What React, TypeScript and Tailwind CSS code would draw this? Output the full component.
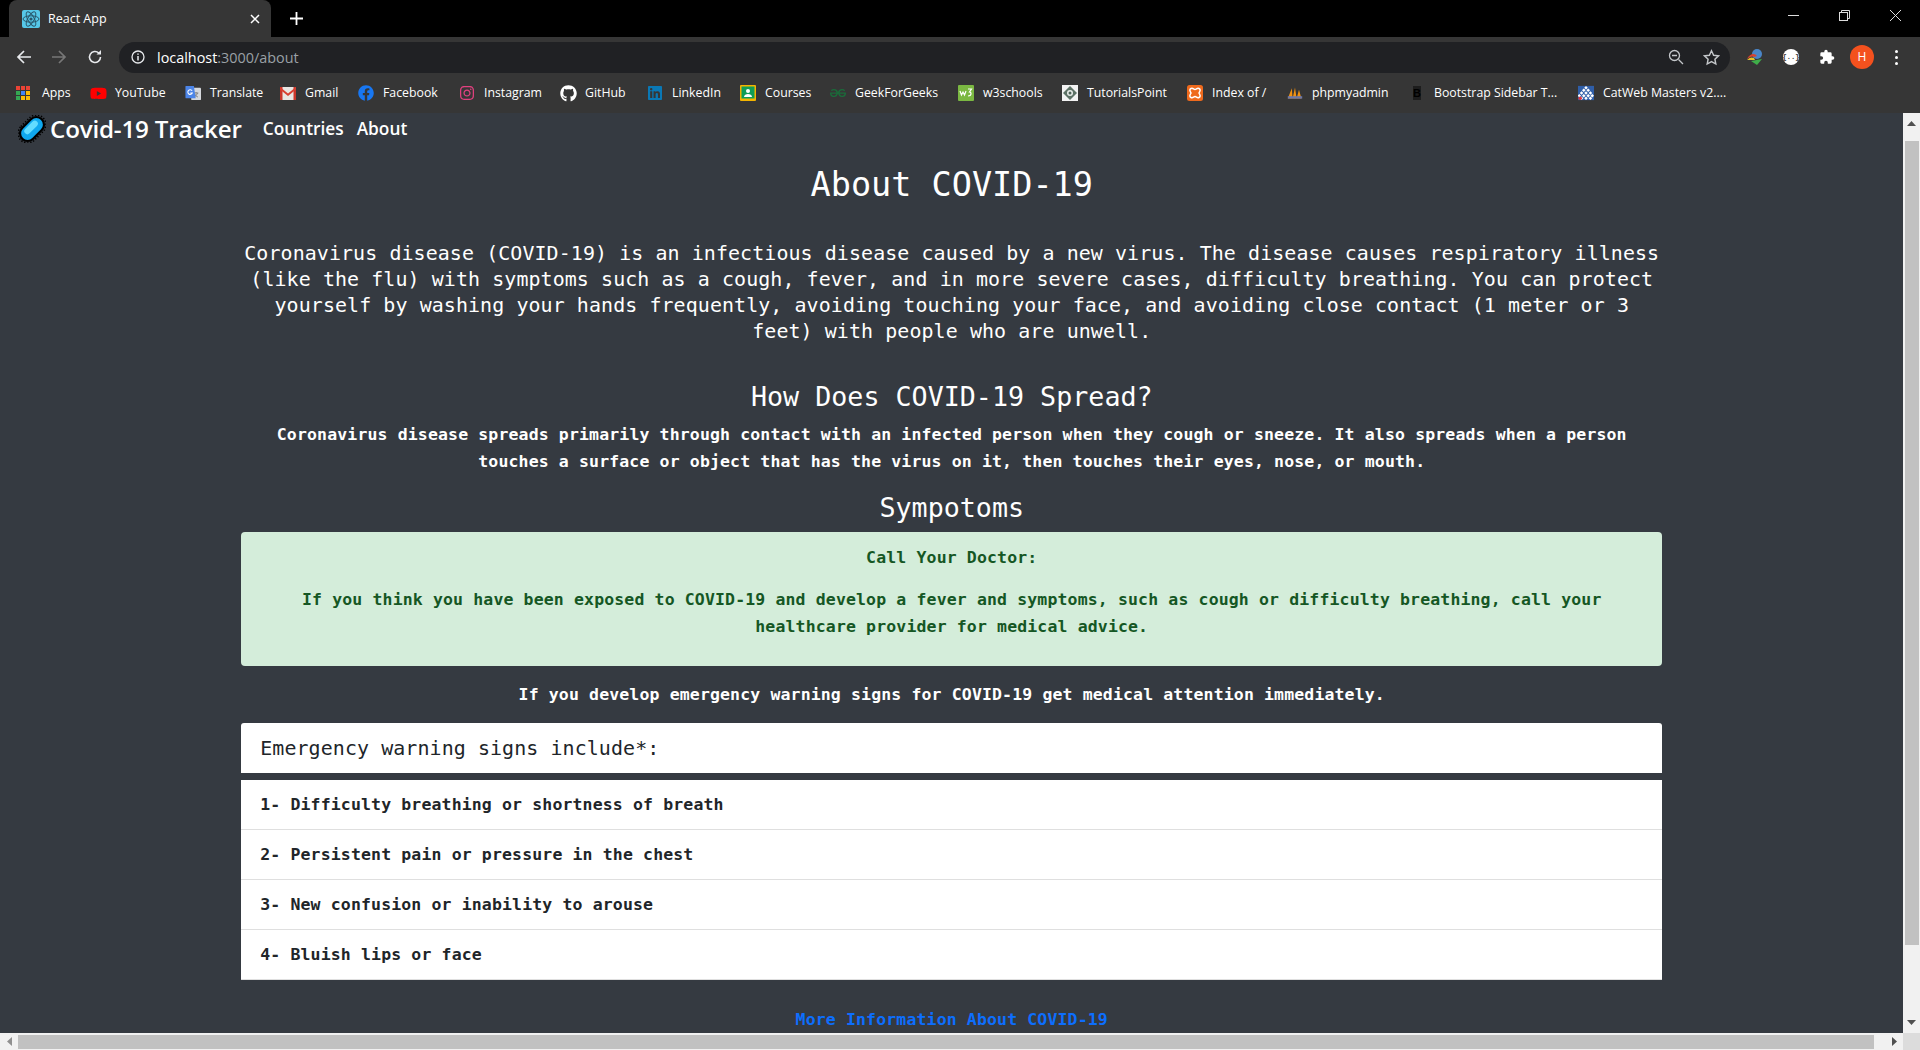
import React from "react";
import { FaFacebook, FaGithub, FaInstagram, FaLinkedin, FaYoutube } from "react-icons/fa";
import { SiGeeksforgeeks } from "react-icons/si";

const Apps = () => (
  <svg width="16" height="16" viewBox="0 0 16 16">
    {[1, 6, 11].flatMap((y, r) =>
      [1, 6, 11].map((x, c) => (
        <rect key={`${r}${c}`} x={x} y={y} width="4" height="4" fill={[["#ea4335", "#ea4335", "#ea4335"], ["#34a853", "#4285f4", "#fbbc05"], ["#34a853", "#fbbc05", "#fbbc05"]][r][c]} />
      ))
    )}
  </svg>
);
const Translate = () => (
  <svg width="18" height="18" viewBox="0 0 18 18">
    <rect x="7" y="3" width="11" height="14" rx="1" fill="#d5d8dc" />
    <path d="M10 9h5M12.500 8v1M14 9c-.5 2-2 3.500-3.500 4M11 10c.5 1.500 2 3 3.500 3.500" stroke="#777" strokeWidth="1" fill="none" />
    <path d="M1 1h9l2 14H1.500A1 1 0 0 1 .5 14V2A1 1 0 0 1 1 1z" fill="#4c85e8" />
    <path d="M8 6.500A2.600 2.600 0 1 0 8.200 9H6" stroke="#fff" strokeWidth="1.200" fill="none" />
  </svg>
);
const Gmail = () => (
  <svg width="16" height="16" viewBox="0 0 16 16">
    <rect x="0" y="2" width="16" height="13" fill="#e8e6e3" />
    <path d="M0 2h2.500v13H0zM13.500 2H16v13h-2.500z" fill="#c9362b" />
    <path d="M0 2l8 6.500L16 2v2.500L8 11 0 4.500z" fill="#d93f31" />
  </svg>
);
const Courses = () => (
  <svg width="16" height="16" viewBox="0 0 16 16">
    <rect width="16" height="16" rx="1" fill="#f4b400" />
    <rect x="1.500" y="1.500" width="13" height="12" fill="#0f9d58" />
    <circle cx="8" cy="6" r="2" fill="#fff" />
    <path d="M4 12c0-4 8-4 8 0z" fill="#fff" />
  </svg>
);
const W3 = () => (
  <svg width="16" height="16" viewBox="0 0 16 16">
    <rect width="16" height="16" rx="1" fill="#7bb842" />
    <path d="M2 6l1.500 4L5 7l1.500 3L8 6M10 4h3.500l-2 3c2 0 2.500 4-1.500 4" stroke="#fff" strokeWidth="1.200" fill="none" />
  </svg>
);
const Tutorials = () => (
  <svg width="16" height="16" viewBox="0 0 16 16">
    <rect width="16" height="16" fill="#f3f3f3" />
    <path d="M8 1l7 7-7 7-7-7z" fill="#5d7266" />
    <circle cx="8" cy="8" r="3" fill="#e8ece9" />
    <circle cx="8" cy="8" r="1.500" fill="#4d6357" />
  </svg>
);
const Xampp = () => (
  <svg width="16" height="16" viewBox="0 0 16 16">
    <rect width="16" height="16" rx="2.500" fill="#ef6a1d" />
    <path d="M4 3.500c2-1 2.500 1 4 1s2-2 4-1 1 2.500 0 4.500c1 2 2 3.500 0 4.500s-2.500-1-4-1-2 2-4 1-1-2.500 0-4.500c-1-2-2-3.500 0-4.500z" fill="none" stroke="#fff" strokeWidth="1.500" />
  </svg>
);
const Pma = () => (
  <svg width="20" height="16" viewBox="0 0 20 16">
    <path d="M1 15L6 2l1 13zM7 15l3-14 2 14zM12 15l3-11 3 11z" fill="#f29111" />
    <rect x="1" y="12" width="18" height="3" fill="#6c78a8" />
  </svg>
);
const BootB = () => (
  <svg width="16" height="16" viewBox="0 0 16 16">
    <rect x="4" y="1" width="8" height="14" fill="#1d1d1d" />
    <text x="8" y="12" textAnchor="middle" fontSize="11" fontWeight="700" fontFamily="Liberation Sans, sans-serif" fill="#000">B</text>
  </svg>
);
const CatWeb = () => (
  <svg width="18" height="16" viewBox="0 0 18 16">
    <rect width="18" height="16" fill="#2f5ea8" />
    {[[9, 2], [6.5, 5], [11.5, 5], [4, 8], [9, 8], [14, 8], [1.5, 11], [6.5, 11], [11.5, 11], [16, 11], [4, 14], [9, 14], [14, 14]].map(([x, y], i) => (
      <path key={i} d={`M${x} ${y - 2}l2 2-2 2-2-2z`} fill="#fff" />
    ))}
    <circle cx="2.500" cy="14" r="2" fill="#e0323c" />
  </svg>
);

const bookmarks = [
  { t: "Apps", i: <Apps />, w: "w-[29px]", g: "ml-[19px]" },
  { t: "YouTube", i: <span className="text-[#f00]"><FaYoutube size={17} /></span>, w: "w-[50px]", g: "ml-[19px]" },
  { t: "Translate", i: <Translate />, w: "w-[52px]", g: "ml-[20px]" },
  { t: "Gmail", i: <Gmail />, w: "w-[34px]", g: "ml-[18px]" },
  { t: "Facebook", i: <span className="text-[#1877f2]"><FaFacebook size={16} /></span>, w: "w-[55px]", g: "ml-[19px]" },
  { t: "Instagram", i: <span className="text-[#e1417f]"><FaInstagram size={16} /></span>, w: "w-[57px]", g: "ml-[21px]" },
  { t: "GitHub", i: <span className="text-white"><FaGithub size={17} /></span>, w: "w-[42px]", g: "ml-[19px]" },
  { t: "LinkedIn", i: <span className="text-[#0a78b5]"><FaLinkedin size={16} /></span>, w: "w-[49px]", g: "ml-[20px]" },
  { t: "Courses", i: <Courses />, w: "w-[47px]", g: "ml-[19px]" },
  { t: "GeekForGeeks", i: <span className="text-[#1b6b3a]"><SiGeeksforgeeks size={16} /></span>, w: "w-[84px]", g: "ml-[18px]" },
  { t: "w3schools", i: <W3 />, w: "w-[60px]", g: "ml-[19px]" },
  { t: "TutorialsPoint", i: <Tutorials />, w: "w-[80px]", g: "ml-[19px]" },
  { t: "Index of /", i: <Xampp />, w: "w-[55px]", g: "ml-[20px]" },
  { t: "phpmyadmin", i: <Pma />, w: "w-[77px]", g: "ml-[20px]" },
  { t: "Bootstrap Sidebar T...", i: <BootB />, w: "w-[125px]", g: "ml-[20px]" },
  { t: "CatWeb Masters v2....", i: <CatWeb />, w: "w-[126px]", g: "ml-[19px]" },
];

const ReactIcon = () => (
  <svg width="18" height="18" viewBox="0 0 18 18" className="rounded-[2px] bg-[#56c8e8]">
    <g fill="none" stroke="#29566a" strokeWidth="1">
      <ellipse cx="9" cy="9" rx="8" ry="3.200" />
      <ellipse cx="9" cy="9" rx="8" ry="3.200" transform="rotate(60 9 9)" />
      <ellipse cx="9" cy="9" rx="8" ry="3.200" transform="rotate(120 9 9)" />
    </g>
    <circle cx="9" cy="9" r="1.600" fill="#29566a" />
  </svg>
);

const Virus = () => (
  <svg width="28" height="28" viewBox="-1 -1 32 32">
    <g transform="rotate(-45 15 15)">
      <rect x="-2" y="5" width="34" height="20" rx="10" fill="#000" />
      <rect x="-3" y="4" width="36" height="22" rx="11" fill="none" stroke="#000" strokeWidth="1.800" strokeDasharray="1.500 2" />
      <rect x="0.500" y="7.500" width="29" height="15" rx="7.500" fill="#10a8ee" />
      <rect x="6" y="9.500" width="19" height="7" rx="3.500" fill="#63dcff" />
    </g>
  </svg>
);

const Back = ({ c }: { c: string }) => (
  <svg width="16" height="16" viewBox="0 0 16 16" fill="none" stroke={c} strokeWidth="1.700">
    <path d="M15 8H2M8 2L2 8l6 6" />
  </svg>
);

const chromeFont = "font-['Open_Sans',sans-serif]";
const mono = "font-['DejaVu_Sans_Mono',monospace]";

export default function App() {
  return (
    <div className="flex h-[1050px] w-[1920px] flex-col overflow-hidden bg-[#353a41]">
      {/* Tab strip */}
      <div className={`flex h-[37px] shrink-0 items-stretch bg-black ${chromeFont}`}>
        <div className="ml-[9px] flex w-[262px] items-center rounded-t-[8px] bg-[#363636] pl-[13px] pr-[9px] text-white">
          <ReactIcon />
          <span className="ml-[8px] pt-[1px] text-[12.500px]">React App</span>
          <svg width="10" height="10" viewBox="0 0 10 10" className="ml-auto mr-[2px]" stroke="#fff" strokeWidth="1.500">
            <path d="M1 1l8 8M9 1L1 9" />
          </svg>
        </div>
        <div className="ml-[19px] flex items-center">
          <svg width="13" height="13" viewBox="0 0 13 13" stroke="#fff" strokeWidth="1.800">
            <path d="M6.500 0v13M0 6.500h13" />
          </svg>
        </div>
        <div className="ml-auto flex items-center pb-[6px]">
          <svg width="11" height="11" viewBox="0 0 11 11" stroke="#ddd" strokeWidth="1"><path d="M0 5.500h11" /></svg>
          <svg width="11" height="11" viewBox="0 0 11 11" fill="none" stroke="#ddd" strokeWidth="1" className="ml-[40px]">
            <rect x="0.500" y="2.500" width="8" height="8" />
            <path d="M2.500 2.500v-2h8v8h-2" />
          </svg>
          <svg width="13" height="13" viewBox="0 0 13 13" stroke="#ddd" strokeWidth="1" className="ml-[39px] mr-[18px]"><path d="M1 1l11 11M12 1L1 12" /></svg>
        </div>
      </div>

      {/* Toolbar */}
      <div className="flex h-[36px] shrink-0 items-center bg-[#363636] pb-[1px] pt-[5px]">
        <div className="ml-[16px]"><Back c="#e8eaed" /></div>
        <div className="ml-[19px] rotate-180"><Back c="#777" /></div>
        <svg width="16" height="16" viewBox="0 0 16 16" fill="none" stroke="#e8eaed" strokeWidth="1.600" className="ml-[20px]">
          <path d="M13.500 8a5.500 5.500 0 1 1-1.700-4" />
          <path d="M14 1v4.500H9.500" fill="#e8eaed" stroke="none" />
        </svg>
        <div className={`ml-[16px] flex h-[31px] w-[1611px] items-center rounded-full bg-[#202124] pl-[12px] pr-[9px] ${chromeFont}`}>
          <svg width="14" height="14" viewBox="0 0 14 14" fill="none" stroke="#e8eaed" strokeWidth="1.300">
            <circle cx="7" cy="7" r="6" />
            <path d="M7 6v4.500M7 3.500v1.300" strokeWidth="1.500" />
          </svg>
          <span className="ml-[12px] pt-[1px] text-[14.400px] text-white">
            localhost<span className="text-[#9aa0a6]">:3000/about</span>
          </span>
          <svg width="16" height="16" viewBox="0 0 16 16" fill="none" stroke="#c4c7ca" strokeWidth="1.300" className="ml-auto">
            <circle cx="6.500" cy="6.500" r="5" />
            <path d="M10.500 10.500L15 15M4 6.500h5" />
          </svg>
          <svg width="17" height="17" viewBox="0 0 24 24" fill="none" stroke="#c4c7ca" strokeWidth="2" className="ml-[19px] mr-[1px]">
            <path d="M12 2.500l3 6.300 6.800.9-5 4.700 1.300 6.800-6.100-3.300-6.100 3.300 1.300-6.800-5-4.700 6.800-.9z" />
          </svg>
        </div>
        <svg width="18" height="18" viewBox="0 0 18 18" className="ml-[16px]">
          <circle cx="11" cy="6" r="5" fill="#4a86c8" />
          <path d="M1 11c3-6 8-6 10-3l-3 1c-2-1-4 0-7 2z" fill="#d9432f" />
          <path d="M1 12c3-3 5-3 7-2l1 2z" fill="#e8c32a" />
          <path d="M5 13l11-2-5 6z" fill="#3fae49" />
        </svg>
        <div className="ml-[19px] flex h-[16px] w-[16px] items-center justify-center rounded-full bg-white">
          <span className="font-['Liberation_Mono',monospace] text-[7px] font-bold leading-none text-[#333]">{"{..}"}</span>
        </div>
        <svg width="16" height="16" viewBox="0 0 24 24" fill="#fff" className="ml-[20px]">
          <path d="M20.500 11H19V7a2 2 0 0 0-2-2h-4V3.500a2.500 2.500 0 0 0-5 0V5H4a2 2 0 0 0-2 2v3.800h1.500a2.700 2.700 0 0 1 0 5.400H2V20a2 2 0 0 0 2 2h3.800v-1.500a2.700 2.700 0 0 1 5.400 0V22H17a2 2 0 0 0 2-2v-4h1.500a2.500 2.500 0 0 0 0-5z" />
        </svg>
        <div className={`ml-[15px] flex h-[24px] w-[24px] items-center justify-center rounded-full bg-[#f4511e] text-[12px] text-white ${chromeFont}`}>H</div>
        <div className="ml-[21px] flex flex-col gap-[3px]">
          <span className="h-[3px] w-[3px] rounded-full bg-white" />
          <span className="h-[3px] w-[3px] rounded-full bg-white" />
          <span className="h-[3px] w-[3px] rounded-full bg-white" />
        </div>
      </div>

      {/* Bookmarks */}
      <div className={`flex h-[40px] shrink-0 items-center bg-[#363636] pl-[15px] text-[12.300px] text-white ${chromeFont}`}>
        {bookmarks.map((b, i) => (
          <div key={b.t} className={`flex items-center ${i === 0 ? "" : b.g}`}>
            <span className="flex h-[16px] w-[16px] items-center justify-center">{b.i}</span>
            <span className={`whitespace-nowrap ${i === 0 ? "ml-[11px]" : "ml-[9px]"} ${b.w}`}>{b.t}</span>
          </div>
        ))}
      </div>

      {/* Viewport */}
      <div className="flex min-h-0 flex-1">
        <div className="flex w-[1903px] min-w-0 flex-col overflow-hidden bg-[#353a41] text-white">
          <nav className={`flex h-[32px] shrink-0 items-center pb-[1px] pl-[18px] ${chromeFont}`}>
            <Virus />
            <span className="ml-[4px] text-[24.200px] font-semibold leading-[31px] tracking-[-0.2px]">Covid-19 Tracker</span>
            <span className="ml-[21px] text-[17.300px] font-semibold leading-[31px]">Countries</span>
            <span className="ml-[13px] text-[17.300px] font-semibold leading-[31px]">About</span>
          </nav>
          <main className={`flex w-[1421px] flex-col self-center text-center ${mono} ml-[0.5px]`}>
            <h1 className="mt-[18px] text-[33.500px] leading-[44px]">About COVID-19</h1>
            <p className="mt-[33px] text-[19.950px] leading-[26px] tracking-[0.09px]">
              Coronavirus disease (COVID-19) is an infectious disease caused by a new virus. The disease causes respiratory illness (like the flu) with symptoms such as a cough, fever, and in more severe cases, difficulty breathing. You can protect yourself by washing your hands frequently, avoiding touching your face, and avoiding close contact (1 meter or 3 feet) with people who are unwell.
            </p>
            <h2 className="mt-[35px] text-[26.700px] leading-[35px]">How Does COVID-19 Spread?</h2>
            <p className="mt-[7px] text-[16.500px] font-bold leading-[27px] tracking-[0.14px]">
              Coronavirus disease spreads primarily through contact with an infected person when they cough or sneeze. It also spreads when a person touches a surface or object that has the virus on it, then touches their eyes, nose, or mouth.
            </p>
            <h2 className="mt-[15px] text-[26.700px] leading-[35px]">Sympotoms</h2>
            <div className="mt-[7px] rounded-[4px] bg-[#d4edda] px-[18px] pb-[26px] pt-[12px] text-[16.500px] font-bold leading-[27px] tracking-[0.14px] text-[#155724]">
              <p>Call Your Doctor:</p>
              <p className="mt-[15px]">
                If you think you have been exposed to COVID-19 and develop a fever and symptoms, such as cough or difficulty breathing, call your healthcare provider for medical advice.
              </p>
            </div>
            <p className="mt-[15px] text-[16.500px] font-bold leading-[27px] tracking-[0.14px]">
              If you develop emergency warning signs for COVID-19 get medical attention immediately.
            </p>
            <div className="mt-[15px] flex h-[50px] items-center rounded-t-[3px] bg-white pl-[19px] pt-[2px] text-left text-[19.950px] tracking-[0.09px] text-[#212529]">
              Emergency warning signs include*:
            </div>
            <ul className="mt-[7px] border-b border-[#dfdfdf] bg-white text-left text-[16.500px] font-bold tracking-[0.14px] text-[#212529]">
              <li className="flex h-[50px] items-center border-b border-[#dfdfdf] pl-[19px] pt-[1px]">1- Difficulty breathing or shortness of breath</li>
              <li className="flex h-[50px] items-center border-b border-[#dfdfdf] pl-[19px] pt-[1px]">2- Persistent pain or pressure in the chest</li>
              <li className="flex h-[50px] items-center border-b border-[#dfdfdf] pl-[19px] pt-[1px]">3- New confusion or inability to arouse</li>
              <li className="flex h-[49px] items-center pl-[19px] pt-[1px]">4- Bluish lips or face</li>
            </ul>
            <a className="mt-[26px] text-[16.500px] font-bold leading-[27px] tracking-[0.14px] text-[#0d6efd]">More Information About COVID-19</a>
          </main>
        </div>
        {/* Vertical scrollbar */}
        <div className="flex w-[17px] flex-col items-center bg-[#f1f1f1]">
          <svg width="9" height="5" viewBox="0 0 9 5" className="mt-[8px]" fill="#505050"><path d="M4.500 0L9 5H0z" /></svg>
          <div className="mt-[15px] h-[804px] w-[14px] bg-[#c1c1c1]" />
          <svg width="9" height="5" viewBox="0 0 9 5" className="mt-[75px]" fill="#505050"><path d="M0 0h9L4.500 5z" /></svg>
        </div>
      </div>

      {/* Horizontal scrollbar */}
      <div className="flex h-[17px] shrink-0 items-center bg-[#f1f1f1]">
        <svg width="5" height="9" viewBox="0 0 5 9" className="ml-[7px]" fill="#909090"><path d="M5 0v9L0 4.500z" /></svg>
        <div className="ml-[6px] h-[14px] w-[1856px] bg-[#c1c1c1]" />
        <svg width="5" height="9" viewBox="0 0 5 9" className="ml-[18px]" fill="#505050"><path d="M0 0l5 4.500L0 9z" /></svg>
        <div className="ml-auto h-[17px] w-[17px] bg-[#dcdcdc]" />
      </div>
    </div>
  );
}
